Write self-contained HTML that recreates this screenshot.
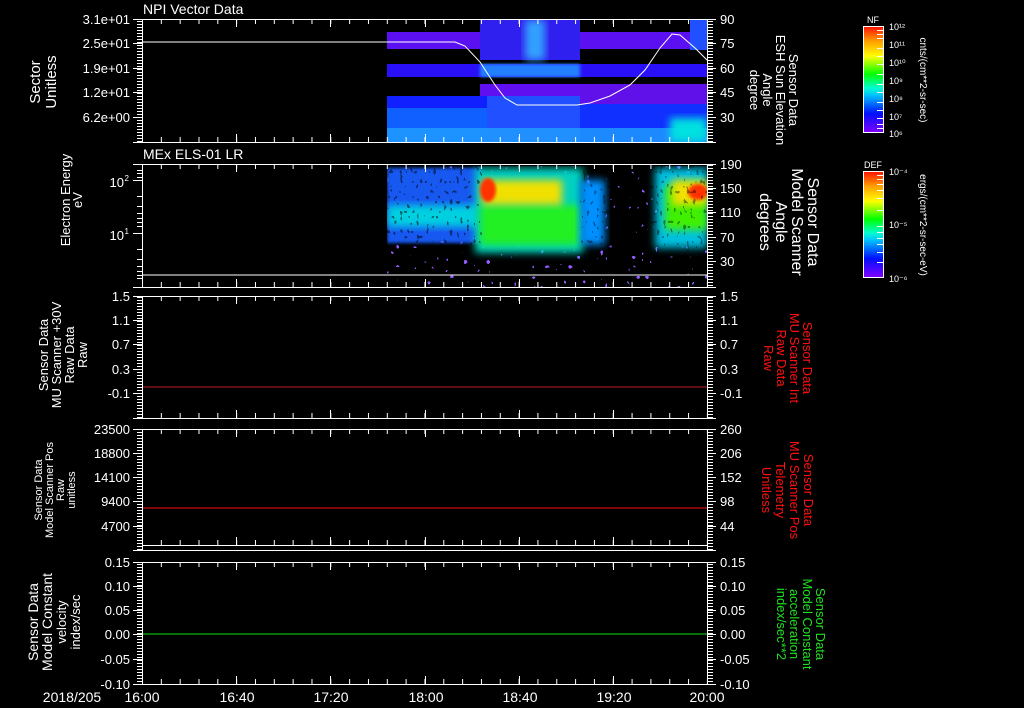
<!DOCTYPE html>
<html><head><meta charset="utf-8"><style>
html,body{margin:0;padding:0;background:#000;}
svg{display:block;}
text{font-family:"Liberation Sans",sans-serif;fill:#fff;}
</style></head><body>
<svg width="1024" height="708" viewBox="0 0 1024 708" xmlns="http://www.w3.org/2000/svg">
<defs>
<pattern id="xt" x="142" y="0" width="18.83" height="708" patternUnits="userSpaceOnUse"><rect x="0" y="0" width="1" height="708" fill="#fff"/></pattern>
<pattern id="yt" x="0" y="0" width="20" height="3" patternUnits="userSpaceOnUse"><rect x="0" y="0" width="20" height="1" fill="#fff"/></pattern>
<linearGradient id="rb" x1="0" y1="1" x2="0" y2="0">
<stop offset="0" stop-color="#8000ff"/><stop offset="0.18" stop-color="#0010ff"/><stop offset="0.35" stop-color="#00c0ff"/><stop offset="0.42" stop-color="#00ffd0"/><stop offset="0.55" stop-color="#00ff00"/><stop offset="0.72" stop-color="#ffff00"/><stop offset="0.86" stop-color="#ffa000"/><stop offset="1" stop-color="#ff1000"/></linearGradient>
<filter id="bl" x="-20%" y="-20%" width="140%" height="140%"><feGaussianBlur stdDeviation="4"/></filter>
<filter id="bl2"><feGaussianBlur stdDeviation="1.5"/></filter>
<filter id="spk" x="0" y="0" width="100%" height="100%"><feTurbulence type="fractalNoise" baseFrequency="0.3 0.2" numOctaves="1" seed="3"/><feColorMatrix type="matrix" values="0 0 0 0 0  0 0 0 0 0  0 0 0 0 0  1 0 0 0 0"/><feComponentTransfer><feFuncA type="discrete" tableValues="0 0 0 0 1 1"/></feComponentTransfer></filter>
<filter id="dots" x="0" y="0" width="100%" height="100%"><feTurbulence type="fractalNoise" baseFrequency="0.22 0.2" numOctaves="1" seed="7"/><feColorMatrix type="matrix" values="0 0 0 0 0.3  0 0 0 0 0.1  0 0 0 0 1  1 0 0 0 0"/><feComponentTransfer><feFuncA type="discrete" tableValues="0 0 0 0 0 1 1"/></feComponentTransfer></filter>
<clipPath id="c1"><rect x="387" y="19" width="320" height="123"/></clipPath>
<clipPath id="c2"><rect x="387" y="166" width="320" height="121"/></clipPath>
</defs>

<g clip-path="url(#c1)">
<rect x="387" y="32" width="320" height="17" fill="#5a10f0"/>
<rect x="480" y="20" width="100" height="40" fill="#3020f0"/>
<rect x="525" y="20" width="20" height="40" fill="#30a0ff" filter="url(#bl)"/>
<rect x="690" y="20" width="17" height="30" fill="#2050ff"/>
<rect x="387" y="64" width="320" height="13" fill="#2a10f8"/>
<rect x="480" y="64" width="100" height="13" fill="#2080ff" filter="url(#bl2)"/>
<rect x="480" y="84" width="100" height="12" fill="#6010f0"/>
<rect x="580" y="84" width="127" height="20" fill="#6010e8"/>
<rect x="387" y="96" width="193" height="46" fill="#1020ff"/>
<rect x="387" y="108" width="100" height="34" fill="#1060ff"/>
<rect x="487" y="96" width="93" height="46" fill="#2050ff"/>
<rect x="580" y="104" width="127" height="38" fill="#1030ff"/>
<rect x="387" y="128" width="320" height="14" fill="#20a0ff" opacity="0.8"/>
<rect x="670" y="118" width="37" height="24" fill="#00e0e0" filter="url(#bl)"/>
</g>
<polyline points="142,42 455,42 465,46 480,62 495,85 505,98 517,105 577,105 590,103 610,96 630,85 645,70 660,48 672,34 680,35 695,48 707,60" fill="none" stroke="#fff" stroke-width="1"/>

<g clip-path="url(#c2)">
<rect x="387" y="166" width="320" height="121" filter="url(#dots)"/>
<rect x="387" y="168" width="95" height="75" fill="#1858f0" filter="url(#bl2)"/>
<rect x="387" y="205" width="95" height="22" fill="#00d0e0" filter="url(#bl)"/>
<rect x="475" y="168" width="108" height="85" fill="#00d0c0" filter="url(#bl)"/>
<rect x="480" y="205" width="100" height="40" fill="#20f020" filter="url(#bl)"/>
<rect x="482" y="180" width="80" height="25" fill="#f0e000" filter="url(#bl)"/>
<ellipse cx="488" cy="190" rx="8" ry="12" fill="#ff3000" filter="url(#bl2)"/>
<rect x="580" y="180" width="25" height="65" fill="#0090ff" filter="url(#bl)"/>
<rect x="655" y="168" width="52" height="80" fill="#00c0e0" filter="url(#bl)"/>
<rect x="665" y="185" width="42" height="45" fill="#40f000" filter="url(#bl)"/>
<rect x="672" y="180" width="35" height="25" fill="#f0e000" filter="url(#bl)"/>
<ellipse cx="698" cy="192" rx="10" ry="8" fill="#ff3000" filter="url(#bl2)"/>
<rect x="387" y="166" width="95" height="80" filter="url(#spk)" opacity="0.5"/>
<rect x="580" y="166" width="127" height="90" filter="url(#spk)" opacity="0.4"/>
</g>
<line x1="142" y1="275" x2="707" y2="275" stroke="#fff"/>

<line x1="142" y1="387" x2="707" y2="387" stroke="#c02020"/>
<line x1="142" y1="508" x2="707" y2="508" stroke="#ff1010"/>
<line x1="142" y1="634" x2="707" y2="634" stroke="#10e010"/>

<g fill="none" stroke="#fff" stroke-width="1">
<rect x="142.5" y="19.5" width="565" height="123"/>
<rect x="142.5" y="164.5" width="565" height="123"/>
<rect x="142.5" y="296.5" width="565" height="122"/>
<rect x="142.5" y="429.5" width="565" height="121"/>
<rect x="142.5" y="562.5" width="565" height="122"/>
<line x1="142" y1="545.5" x2="707" y2="545.5"/>
</g>
<g fill="url(#xt)">
<rect x="142" y="19" width="566" height="5"/><rect x="142" y="137" width="566" height="5"/>
<rect x="142" y="164" width="566" height="5"/><rect x="142" y="282" width="566" height="5"/>
<rect x="142" y="296" width="566" height="5"/><rect x="142" y="413" width="566" height="5"/>
<rect x="142" y="429" width="566" height="5"/><rect x="142" y="540" width="566" height="5"/>
<rect x="142" y="562" width="566" height="5"/><rect x="142" y="679" width="566" height="5"/>
</g>
<g stroke="#fff">
<path d="M236.5 19v8M330.5 19v8M425.5 19v8M519.5 19v8M613.5 19v8M236.5 142v-8M330.5 142v-8M425.5 142v-8M519.5 142v-8M613.5 142v-8"/>
<path d="M236.5 164v8M330.5 164v8M425.5 164v8M519.5 164v8M613.5 164v8M236.5 287v-8M330.5 287v-8M425.5 287v-8M519.5 287v-8M613.5 287v-8"/>
<path d="M236.5 296v8M330.5 296v8M425.5 296v8M519.5 296v8M613.5 296v8M236.5 418v-8M330.5 418v-8M425.5 418v-8M519.5 418v-8M613.5 418v-8"/>
<path d="M236.5 429v8M330.5 429v8M425.5 429v8M519.5 429v8M613.5 429v8M236.5 545v-8M330.5 545v-8M425.5 545v-8M519.5 545v-8M613.5 545v-8"/>
<path d="M236.5 562v8M330.5 562v8M425.5 562v8M519.5 562v8M613.5 562v8M236.5 684v-8M330.5 684v-8M425.5 684v-8M519.5 684v-8M613.5 684v-8"/>
<path d="M133 19.5h9M133 142.5h9M708 19.5h8M708 142.5h8M133 164.5h9M133 287.5h9M708 164.5h8M708 287.5h8M133 296.5h9M133 418.5h9M708 296.5h8M708 418.5h8M133 429.5h9M133 550.5h9M708 429.5h8M708 550.5h8M133 562.5h9M133 684.5h9M708 562.5h8M708 684.5h8"/>
</g>
<g fill="url(#yt)">
<rect x="137" y="20" width="5" height="122"/><rect x="708" y="20" width="5" height="122"/>
<rect x="708" y="165" width="5" height="122"/>
<rect x="137" y="297" width="5" height="121"/><rect x="708" y="297" width="5" height="121"/>
<rect x="137" y="430" width="5" height="120"/><rect x="708" y="430" width="5" height="120"/>
<rect x="137" y="563" width="5" height="121"/><rect x="708" y="563" width="5" height="121"/>
</g>
<g stroke="#fff"><path d="M133 43.5h9M133 68.5h9M133 92.5h9M133 117.5h9M708 43.5h8M708 68.5h8M708 92.5h8M708 117.5h8M133 180.5h9M133 233.5h9M137 196.5h5M137 206.5h5M137 213.5h5M137 218.5h5M137 222.5h5M137 226.5h5M137 249.5h5M137 259.5h5M137 266.5h5M137 271.5h5M137 275.5h5M137 278.5h5M137 170.5h5M137 173.5h5M137 177.5h5M708 188.5h8M708 212.5h8M708 237.5h8M708 261.5h8M133 320.5h9M133 344.5h9M133 369.5h9M133 393.5h9M708 320.5h8M708 344.5h8M708 369.5h8M708 393.5h8M133 453.5h9M133 477.5h9M133 501.5h9M133 526.5h9M708 453.5h8M708 477.5h8M708 501.5h8M708 526.5h8M133 586.5h9M133 610.5h9M133 634.5h9M133 659.5h9M708 586.5h8M708 610.5h8M708 634.5h8M708 659.5h8"/></g>

<text x="143" y="14" font-size="14">NPI Vector Data</text>
<text x="143" y="159" font-size="14">MEx ELS-01 LR</text>

<g font-size="13" text-anchor="end">
<text x="130" y="24">3.1e+01</text><text x="130" y="48">2.5e+01</text><text x="130" y="73">1.9e+01</text><text x="130" y="97">1.2e+01</text><text x="130" y="122">6.2e+00</text>
<text x="124" y="187">10</text><text x="129" y="181" font-size="8">2</text>
<text x="124" y="240">10</text><text x="129" y="234" font-size="8">1</text>
<text x="130" y="301">1.5</text><text x="130" y="325">1.1</text><text x="130" y="349">0.7</text><text x="130" y="374">0.3</text><text x="130" y="398">-0.1</text>
<text x="130" y="434">23500</text><text x="130" y="458">18800</text><text x="130" y="482">14100</text><text x="130" y="506">9400</text><text x="130" y="531">4700</text>
<text x="130" y="567">0.15</text><text x="130" y="591">0.10</text><text x="130" y="615">0.05</text><text x="130" y="639">0.00</text><text x="130" y="664">-0.05</text><text x="130" y="689">-0.10</text>
</g>
<g font-size="13">
<text x="720" y="24">90</text><text x="720" y="48">75</text><text x="720" y="73">60</text><text x="720" y="97">45</text><text x="720" y="122">30</text>
<text x="720" y="169">190</text><text x="720" y="193">150</text><text x="720" y="217">110</text><text x="720" y="242">70</text><text x="720" y="266">30</text>
<text x="720" y="301">1.5</text><text x="720" y="325">1.1</text><text x="720" y="349">0.7</text><text x="720" y="374">0.3</text><text x="720" y="398">-0.1</text>
<text x="720" y="434">260</text><text x="720" y="458">206</text><text x="720" y="482">152</text><text x="720" y="506">98</text><text x="720" y="531">44</text>
<text x="720" y="567">0.15</text><text x="720" y="591">0.10</text><text x="720" y="615">0.05</text><text x="720" y="639">0.00</text><text x="720" y="664">-0.05</text><text x="720" y="689">-0.10</text>
</g>
<g font-size="14" text-anchor="middle">
<text x="72" y="702">2018/205</text><text x="142" y="702">16:00</text><text x="237" y="702">16:40</text><text x="331" y="702">17:20</text><text x="426" y="702">18:00</text><text x="520" y="702">18:40</text><text x="614" y="702">19:20</text><text x="707" y="702">20:00</text>
</g>

<g text-anchor="middle">
<text transform="translate(40,82) rotate(-90)" font-size="15">Sector</text>
<text transform="translate(56,82) rotate(-90)" font-size="15">Unitless</text>
<text transform="translate(70,200) rotate(-90)" font-size="13">Electron Energy</text>
<text transform="translate(82,200) rotate(-90)" font-size="13">eV</text>
<text transform="translate(48,355) rotate(-90)" font-size="13">Sensor Data</text>
<text transform="translate(61,355) rotate(-90)" font-size="13">MU Scanner +30V</text>
<text transform="translate(74,355) rotate(-90)" font-size="13">Raw Data</text>
<text transform="translate(87,355) rotate(-90)" font-size="13">Raw</text>
<text transform="translate(42,490) rotate(-90)" font-size="11">Sensor Data</text>
<text transform="translate(53,490) rotate(-90)" font-size="11">Model Scanner Pos</text>
<text transform="translate(64,490) rotate(-90)" font-size="11">Raw</text>
<text transform="translate(75,490) rotate(-90)" font-size="11">unitless</text>
<text transform="translate(38,622) rotate(-90)" font-size="14">Sensor Data</text>
<text transform="translate(52,622) rotate(-90)" font-size="14">Model Constant</text>
<text transform="translate(66,622) rotate(-90)" font-size="13">velocity</text>
<text transform="translate(80,622) rotate(-90)" font-size="13">index/sec</text>
</g>
<g text-anchor="middle">
<text transform="translate(789,90) rotate(90)" font-size="13">Sensor Data</text>
<text transform="translate(776,90) rotate(90)" font-size="13">ESH Sun Elevation</text>
<text transform="translate(763,90) rotate(90)" font-size="13">Angle</text>
<text transform="translate(750,90) rotate(90)" font-size="13">degree</text>
<text transform="translate(808,222) rotate(90)" font-size="16">Sensor Data</text>
<text transform="translate(792,222) rotate(90)" font-size="16">Model Scanner</text>
<text transform="translate(776,222) rotate(90)" font-size="16">Angle</text>
<text transform="translate(760,222) rotate(90)" font-size="16">degrees</text>
<text transform="translate(803,358) rotate(90)" font-size="13" style="fill:#ff1010">Sensor Data</text>
<text transform="translate(790,358) rotate(90)" font-size="13" style="fill:#ff1010">MU Scanner Int</text>
<text transform="translate(777,358) rotate(90)" font-size="13" style="fill:#ff1010">Raw Data</text>
<text transform="translate(764,358) rotate(90)" font-size="13" style="fill:#ff1010">Raw</text>
<text transform="translate(804,490) rotate(90)" font-size="13" style="fill:#ff1010">Sensor Data</text>
<text transform="translate(790,490) rotate(90)" font-size="13" style="fill:#ff1010">MU Scanner Pos</text>
<text transform="translate(776,490) rotate(90)" font-size="13" style="fill:#ff1010">Telemetry</text>
<text transform="translate(762,490) rotate(90)" font-size="13" style="fill:#ff1010">Unitless</text>
<text transform="translate(816,624) rotate(90)" font-size="13" style="fill:#20e020">Sensor Data</text>
<text transform="translate(803,624) rotate(90)" font-size="13" style="fill:#20e020">Model Constant</text>
<text transform="translate(790,624) rotate(90)" font-size="13" style="fill:#20e020">acceleration</text>
<text transform="translate(777,624) rotate(90)" font-size="13" style="fill:#20e020">index/sec**2</text>
</g>

<rect x="863.5" y="26.5" width="20" height="106" fill="url(#rb)" stroke="#fff"/>
<rect x="863.5" y="171.5" width="20" height="106" fill="url(#rb)" stroke="#fff"/>
<g stroke="#fff"><path d="M877 30.5h6M877 34.5h6M877 38.5h6M877 48.5h6M877 56.5h6M877 64.5h6M877 74.5h6M877 84.5h6M877 92.5h6M877 102.5h6M877 110.5h6M877 118.5h6M877 124.5h6M877 128.5h6M877 175.5h6M877 179.5h6M877 184.5h6M877 190.5h6M877 198.5h6M877 210.5h6M877 226.5h6M877 232.5h6M877 238.5h6M877 244.5h6M877 252.5h6M877 262.5h6"/></g>
<g font-size="9" text-anchor="middle"><text x="873" y="23">NF</text><text x="873" y="168">DEF</text></g>
<g font-size="9">
<text x="889" y="30">10¹²</text><text x="889" y="48">10¹¹</text><text x="889" y="66">10¹⁰</text><text x="889" y="84">10⁹</text><text x="889" y="102">10⁸</text><text x="889" y="120">10⁷</text><text x="889" y="137">10⁶</text>
<text x="889" y="175">10⁻⁴</text><text x="889" y="228">10⁻⁵</text><text x="889" y="282">10⁻⁶</text>
</g>
<g font-size="10" text-anchor="middle">
<text transform="translate(920,80) rotate(90)">cnts/(cm**2-sr-sec)</text>
<text transform="translate(920,225) rotate(90)">ergs/(cm**2-sr-sec-eV)</text>
</g>
</svg>
</body></html>
